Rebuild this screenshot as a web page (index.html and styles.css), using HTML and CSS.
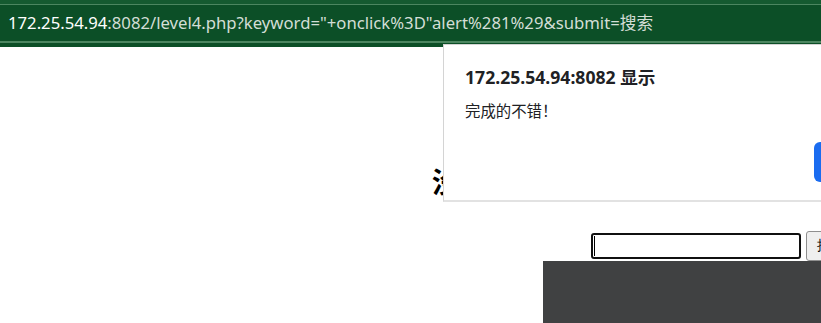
FILE: index.html
```html
<!DOCTYPE html>
<html lang="zh">
<head>
  <meta charset="UTF-8" />
  <title>欢迎来到level4</title>
  <link rel="stylesheet" href="styles.css">
</head>
<body>

  <div class="urlbar">
    <div class="url-field">
      <span class="host">172.25.54.94</span><span class="rest">:8082/level4.php?keyword="+onclick%3D"alert%281%29&amp;submit=搜索</span>
    </div>
  </div>

  <div class="page">
    <h1>欢迎来到level4</h1>
    <h2>没有找到和" onclick="alert(1)相关的结果.</h2>
    <form class="search" action="level4.php" method="GET">
      <span class="input-wrap">
        <input name="keyword" value="">
        <span class="caret"></span>
      </span>
      <input type="submit" name="submit" value="搜索">
    </form>
    <div class="level-img"></div>
  </div>

  <div class="dialog">
    <div class="dialog-title">172.25.54.94:8082 显示</div>
    <div class="dialog-msg">完成的不错！</div>
    <button class="dialog-ok">确定</button>
  </div>

</body>
</html>
```

FILE: styles.css
```css
* {
  box-sizing: border-box;
}

body {
  margin: 0;
  overflow: hidden;
  background: #fff;
  font-family: "Noto Sans", "Noto Sans CJK SC", sans-serif;
}

/* address bar */
.urlbar {
  height: 47px;
  background: #0c4f27;
  border-top: 4px solid #155a30;
  padding-bottom: 4px;
}

.url-field {
  height: 39px;
  border-top: 1px solid #4c8660;
  border-bottom: 2px solid #4c8660;
  padding-left: 8px;
  font-size: 16.7px;
  line-height: 35px;
  white-space: nowrap;
}

.host {
  color: #ffffff;
}

.rest {
  color: #d3ded6;
}

/* page under the alert */
.page {
  width: 1446px;
  text-align: center;
}

h1 {
  margin: 20px 0 0;
  font-size: 32px;
  line-height: 40px;
}

h2 {
  margin: 58px 0 32px;
  padding-left: 432px;
  text-align: left;
  font-size: 28px;
  line-height: 34px;
  font-weight: bold;
  color: #000;
  white-space: nowrap;
}

.search {
  display: flex;
  justify-content: center;
  align-items: center;
  gap: 5px;
  height: 30px;
  margin: 0;
}

.input-wrap {
  position: relative;
  display: block;
}

.search input[name="keyword"] {
  display: block;
  width: 210px;
  height: 26px;
  border: 2px solid #101010;
  border-radius: 3px;
  outline: none;
  font-size: 13px;
}

.caret {
  position: absolute;
  left: 3px;
  top: 3px;
  width: 1px;
  height: 20px;
  background: #000;
}

.search input[type="submit"] {
  width: 49px;
  height: 30px;
  border: 1px solid #8f8f8f;
  border-radius: 3px;
  background: #efefef;
  font-size: 14px;
  padding: 0;
}

.level-img {
  width: 360px;
  height: 180px;
  margin: 0 auto;
  background: #404142;
}

/* alert dialog */
.dialog {
  position: absolute;
  left: 443px;
  top: 44px;
  width: 420px;
  height: 158px;
  background: #fff;
  border: 1px solid #d4d4d4;
  border-bottom: 2px solid #e2e2e2;
  padding: 19px 21px 0;
  color: #202124;
}

.dialog-title {
  font-size: 17.6px;
  font-weight: bold;
  line-height: 26px;
}

.dialog-msg {
  margin-top: 11px;
  font-size: 15.4px;
  line-height: 22px;
}

.dialog-ok {
  position: absolute;
  left: 370px;
  top: 97px;
  width: 80px;
  height: 40px;
  border: none;
  border-radius: 6px;
  background: #1a6cf0;
  color: #fff;
  font-size: 14px;
}
```
